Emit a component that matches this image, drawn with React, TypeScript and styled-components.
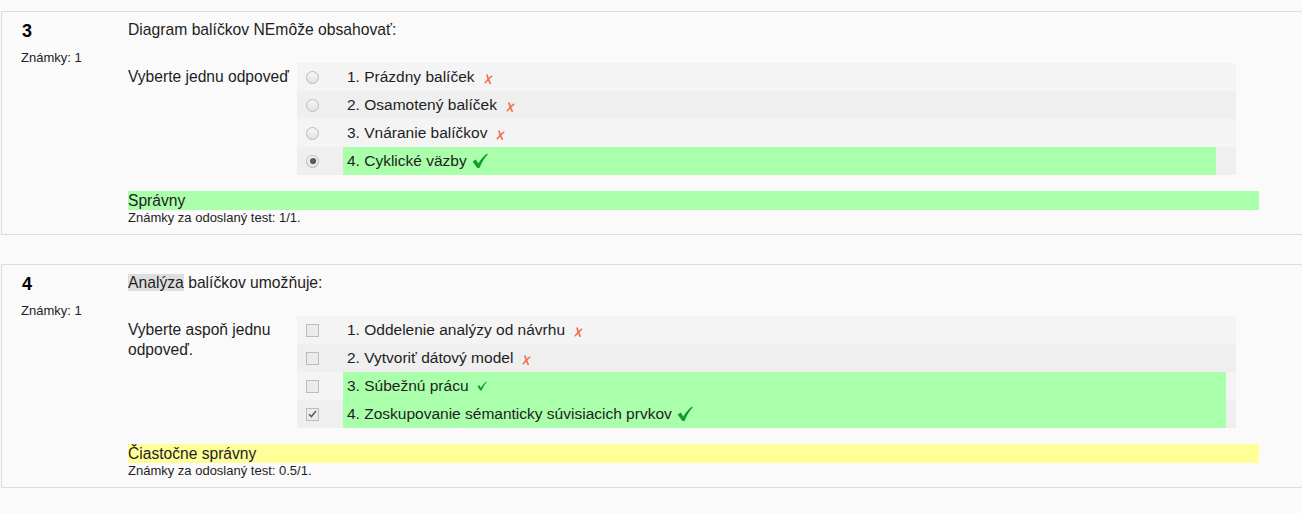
import styled, { createGlobalStyle } from "styled-components";

const GlobalStyle = createGlobalStyle`
  html, body {
    margin: 0;
    padding: 0;
    background: #fafafa;
    overflow: hidden;
  }
  body {
    font-family: "Liberation Sans", Arial, sans-serif;
    color: #1e1e1e;
  }
`;

const Page = styled.div`
  width: 1302px;
  overflow: hidden;
  padding: 11px 0 0 1px;
  box-sizing: border-box;
`;

const Question = styled.div`
  display: flex;
  width: 1340px;
  border: 1px solid #dcdcdc;
  margin-bottom: 29px;
  background: #fafafa;
`;

const Info = styled.div`
  width: 126px;
  flex-shrink: 0;
  box-sizing: border-box;
  padding: 8px 0 0 19px;
`;

const Number = styled.div`
  padding-left: 1px;
  font-size: 18px;
  font-weight: bold;
  line-height: 22px;
  color: #000;
`;

const Marks = styled.div`
  margin-top: 8px;
  font-size: 13px;
  line-height: 15px;
  color: #222;
`;

const Content = styled.div`
  width: 1131px;
  padding-top: 8px;
`;

const QText = styled.div`
  font-size: 15.7px;
  line-height: 20px;
`;

const Highlight = styled.span`
  background: #dedede;
`;

const AnswerBlock = styled.div`
  display: flex;
  margin-top: 23px;
`;

const Prompt = styled.div`
  width: 169px;
  flex-shrink: 0;
  padding-top: 4px;
  font-size: 15.6px;
  line-height: 20px;
`;

const Options = styled.div`
  width: 939px;
  display: flex;
  flex-direction: column;
`;

const Row = styled.div<{ $even: boolean }>`
  display: flex;
  height: 28px;
  background: ${(p) => (p.$even ? "#efefef" : "#f4f4f4")};
`;

const ControlCell = styled.div`
  width: 46px;
  flex-shrink: 0;
  box-sizing: border-box;
  padding-left: 9px;
  display: flex;
  align-items: center;
`;

const Label = styled.div<{ $correct: boolean; $w: number }>`
  width: ${(p) => p.$w}px;
  box-sizing: border-box;
  padding-left: 4px;
  display: flex;
  align-items: center;
  font-size: 15.5px;
  background: ${(p) => (p.$correct ? "#aaffaa" : "transparent")};
`;

const Radio = styled.span<{ $checked: boolean }>`
  position: relative;
  width: 13px;
  height: 13px;
  box-sizing: border-box;
  border-radius: 50%;
  border: 1px solid #b9b9b9;
  background: linear-gradient(#f6f6f6, #e2e2e2);
  &::after {
    content: "";
    display: ${(p) => (p.$checked ? "block" : "none")};
    position: absolute;
    left: 2.5px;
    top: 2.5px;
    width: 6px;
    height: 6px;
    border-radius: 50%;
    background: radial-gradient(circle at 40% 40%, #6a6a6a, #3a3a3a);
  }
`;

const Checkbox = styled.span`
  width: 13px;
  height: 13px;
  box-sizing: border-box;
  border: 1px solid #bcbcbc;
  background: #ebebeb;
  display: flex;
  align-items: center;
  justify-content: center;
`;

const WrongMark = styled.svg`
  margin-left: 9px;
  margin-top: 3px;
`;

const RightMark = styled.svg<{ $gap: number }>`
  margin-left: ${(p) => p.$gap}px;
`;

const Feedback = styled.div<{ $tone: "right" | "partial" }>`
  margin-top: 16px;
  height: 19px;
  line-height: 19px;
  font-size: 15.6px;
  background: ${(p) => (p.$tone === "right" ? "#aaffaa" : "#ffff9a")};
`;

const Grade = styled.div`
  font-size: 13px;
  line-height: 15px;
  padding-bottom: 9px;
`;

type Option = { text: string; state: "wrong" | "right" | "partial"; checked?: boolean };

const Cross = () => (
  <WrongMark width="9" height="10" viewBox="0 0 9 10">
    <path d="M3 1 C3.6 3.4 4.4 6.4 6.2 9.2" stroke="#f4704f" strokeWidth="1.7" fill="none" strokeLinecap="round" />
    <path d="M7.8 2.2 C5.6 4 3.4 6.2 1.2 8.8" stroke="#f4704f" strokeWidth="1.5" fill="none" strokeLinecap="round" />
  </WrongMark>
);

const Tick = ({ size, gap }: { size: number; gap: number }) => (
  <RightMark $gap={gap} width={size} height={size} viewBox="0 0 16 16">
    <path
      d="M0.6 8.4 L3.9 6.6 L6.3 10.6 C8.8 6.6 11.6 3.2 15.1 0.6 L15.7 1.5 C12.4 4.9 9.7 9.5 7.7 14.8 L5.3 15 Z"
      fill="#119c31"
    />
  </RightMark>
);

const BoxTick = () => (
  <svg width="9" height="8" viewBox="0 0 9 8">
    <path d="M1 4.2 L3.4 6.6 L8 1" stroke="#5f5f5f" strokeWidth="1.6" fill="none" />
  </svg>
);

const questions: {
  num: string;
  text: React.ReactNode;
  prompt: string;
  multi: boolean;
  labelWidth: number;
  options: Option[];
  feedback: string;
  tone: "right" | "partial";
  grade: string;
}[] = [
  {
    num: "3",
    text: "Diagram balíčkov NEmôže obsahovať:",
    prompt: "Vyberte jednu odpoveď",
    multi: false,
    labelWidth: 873,
    options: [
      { text: "1. Prázdny balíček", state: "wrong" },
      { text: "2. Osamotený balíček", state: "wrong" },
      { text: "3. Vnáranie balíčkov", state: "wrong" },
      { text: "4. Cyklické väzby", state: "right", checked: true },
    ],
    feedback: "Správny",
    tone: "right",
    grade: "Známky za odoslaný test: 1/1.",
  },
  {
    num: "4",
    text: (
      <>
        <Highlight>Analýza</Highlight> balíčkov umožňuje:
      </>
    ),
    prompt: "Vyberte aspoň jednu odpoveď.",
    multi: true,
    labelWidth: 883,
    options: [
      { text: "1. Oddelenie analýzy od návrhu", state: "wrong" },
      { text: "2. Vytvoriť dátový model", state: "wrong" },
      { text: "3. Súbežnú prácu", state: "partial" },
      { text: "4. Zoskupovanie sémanticky súvisiacich prvkov", state: "right", checked: true },
    ],
    feedback: "Čiastočne správny",
    tone: "partial",
    grade: "Známky za odoslaný test: 0.5/1.",
  },
];

export default function App() {
  return (
    <>
      <GlobalStyle />
      <Page>
        {questions.map((q) => (
          <Question key={q.num}>
            <Info>
              <Number>{q.num}</Number>
              <Marks>Známky: 1</Marks>
            </Info>
            <Content>
              <QText>{q.text}</QText>
              <AnswerBlock>
                <Prompt>{q.prompt}</Prompt>
                <Options>
                  {q.options.map((o, i) => {
                    const correct = o.state !== "wrong";
                    return (
                      <Row key={o.text} $even={i % 2 === 1}>
                        <ControlCell>
                          {q.multi ? (
                            <Checkbox>{o.checked && <BoxTick />}</Checkbox>
                          ) : (
                            <Radio $checked={!!o.checked} />
                          )}
                        </ControlCell>
                        <Label $correct={correct && (o.checked || q.multi)} $w={q.labelWidth}>
                          <span>{o.text}</span>
                          {o.state === "wrong" && <Cross />}
                          {o.state === "right" && <Tick size={16} gap={5} />}
                          {o.state === "partial" && <Tick size={10} gap={8} />}
                        </Label>
                      </Row>
                    );
                  })}
                </Options>
              </AnswerBlock>
              <Feedback $tone={q.tone}>{q.feedback}</Feedback>
              <Grade>{q.grade}</Grade>
            </Content>
          </Question>
        ))}
      </Page>
    </>
  );
}
